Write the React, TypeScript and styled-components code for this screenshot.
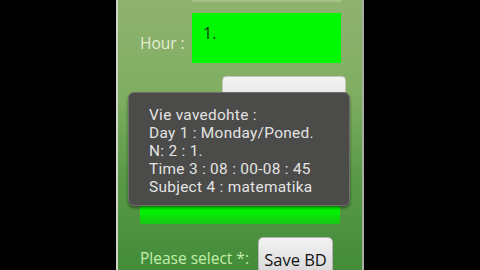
import React from 'react';
import styled, { createGlobalStyle } from 'styled-components';

const GlobalStyle = createGlobalStyle`
  html, body {
    margin: 0;
    padding: 0;
    background: #000;
    overflow: hidden;
  }
  body {
    font-family: "Open Sans", "Noto Sans", sans-serif;
  }
`;

const Page = styled.div`
  display: flex;
  justify-content: center;
  width: 480px;
  height: 270px;
  background: #000;
`;

const Screen = styled.div`
  position: relative;
  box-sizing: border-box;
  width: 248px;
  height: 270px;
  border-left: 2px solid #cfd3c8;
  border-right: 2px solid #a9aca4;
  padding: 0 21px 0 22px;
  background: linear-gradient(180deg, #90b26f 0%, #7fae62 35%, #5a9a48 65%, #438c3a 100%);
  display: flex;
  flex-direction: column;
  overflow: hidden;

  & > * {
    flex-shrink: 0;
  }
`;

const TopEdge = styled.div`
  margin-left: 52px;
  height: 2px;
  background: #a6c088;
`;

const Row = styled.div<{ $top: number; $justify?: string }>`
  display: flex;
  align-items: center;
  justify-content: ${p => p.$justify || 'flex-start'};
  margin-top: ${p => p.$top}px;
`;

const Label = styled.span<{ $color: string }>`
  font-size: 15.5px;
  color: ${p => p.$color};
  white-space: nowrap;
`;

const HourLabel = styled(Label)`
  width: 52px;
  padding-top: 10px;
`;

const GreenField = styled.div`
  box-sizing: border-box;
  width: 149px;
  height: 50px;
  background: #00f800;
  padding: 10px 11px;
  font-size: 16px;
  color: #1f3a1a;
  line-height: 20px;
`;

const WideButton = styled.div`
  width: 124px;
  height: 44px;
  margin-right: -5px;
  border-radius: 4px;
  background: linear-gradient(180deg, #f4f4f4 0%, #e4e4e4 60%, #d2d2d2 100%);
  border: 1px solid #bfc7b8;
  box-sizing: border-box;
`;

const GreenBar = styled.div`
  height: 64px;
  margin-top: 40px;
  width: 200px;
  background: linear-gradient(180deg, #0dd60d 0%, #00ff00 30%, #00f400 80%, #18c818 100%);
  border-radius: 2px;
`;

const SelectLabel = styled(Label)`
  width: 107px;
  line-height: 16px;
  padding-bottom: 6px;
`;

const SaveButton = styled.div`
  box-sizing: border-box;
  width: 75px;
  height: 48px;
  margin-left: 11px;
  padding-top: 10px;
  border-radius: 5px;
  border: 1px solid #b5b5b5;
  background: linear-gradient(180deg, #f2f2f2 0%, #e2e2e2 50%, #cfcfcf 100%);
  color: #111;
  font-size: 16.5px;
  text-align: center;
`;

const Toast = styled.div`
  position: absolute;
  left: 10px;
  top: 92px;
  box-sizing: border-box;
  width: 222px;
  height: 114px;
  padding: 13px 0 0 20px;
  border-radius: 6px;
  border: 1px solid #6e6e6c;
  background: #4b4b49;
  box-shadow: 0 2px 3px rgba(0, 0, 0, 0.45);
  color: #e4e4e4;
  font-family: Roboto, "Open Sans", sans-serif;
  font-size: 15.4px;
  letter-spacing: 0.3px;
  line-height: 18.1px;
`;

const ToastLine = styled.div`
  white-space: nowrap;
`;

const lines = [
  'Vie vavedohte :',
  'Day 1 : Monday/Poned.',
  'N: 2 : 1.',
  'Time 3 : 08 : 00-08 : 45',
  'Subject 4 : matematika',
];

export default function App() {
  return (
    <>
      <GlobalStyle />
      <Page>
        <Screen>
          <TopEdge />
          <Row $top={11}>
            <HourLabel $color="#e6ecd4">Hour :</HourLabel>
            <GreenField>1.</GreenField>
          </Row>
          <Row $top={13} $justify="flex-end">
            <WideButton />
          </Row>
          <GreenBar />
          <Row $top={13}>
            <SelectLabel $color="#c4eeaa">Please select *:</SelectLabel>
            <SaveButton>Save BD</SaveButton>
          </Row>
          <Toast>
            {lines.map(l => (
              <ToastLine key={l}>{l}</ToastLine>
            ))}
          </Toast>
        </Screen>
      </Page>
    </>
  );
}
